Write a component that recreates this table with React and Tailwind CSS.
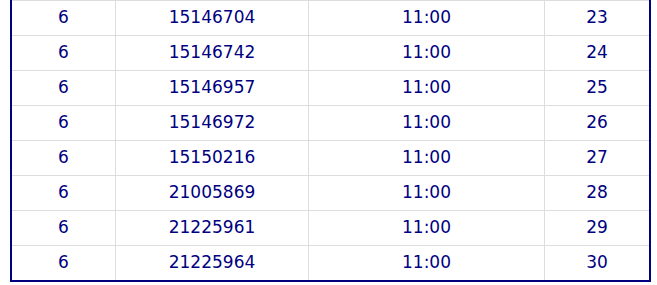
import React from "react";

// rows of the schedule table
const rows = [
  ["6", "15146704", "11:00", "23"],
  ["6", "15146742", "11:00", "24"],
  ["6", "15146957", "11:00", "25"],
  ["6", "15146972", "11:00", "26"],
  ["6", "15150216", "11:00", "27"],
  ["6", "21005869", "11:00", "28"],
  ["6", "21225961", "11:00", "29"],
  ["6", "21225964", "11:00", "30"],
];

const App = () => {
  return (
    <div className="w-[657px] h-[285px] bg-white">
      <div className="ml-[10px] w-[641px] border-x-2 border-b-2 border-[#000080]">
        <div
          className="grid grid-cols-[103px_193px_236px_105px] text-[#000080] text-[17px]"
          style={{ fontFamily: '"DejaVu Sans", sans-serif' }}
        >
          {rows.map((row, i) =>
            row.map((cell, j) => (
              <div
                key={i + "-" + j}
                className={
                  "h-[35px] flex items-center justify-center border-t border-[#dddddd] " +
                  (j > 0 ? "border-l" : "")
                }
              >
                {cell}
              </div>
            ))
          )}
        </div>
      </div>
    </div>
  );
};

export default App;
